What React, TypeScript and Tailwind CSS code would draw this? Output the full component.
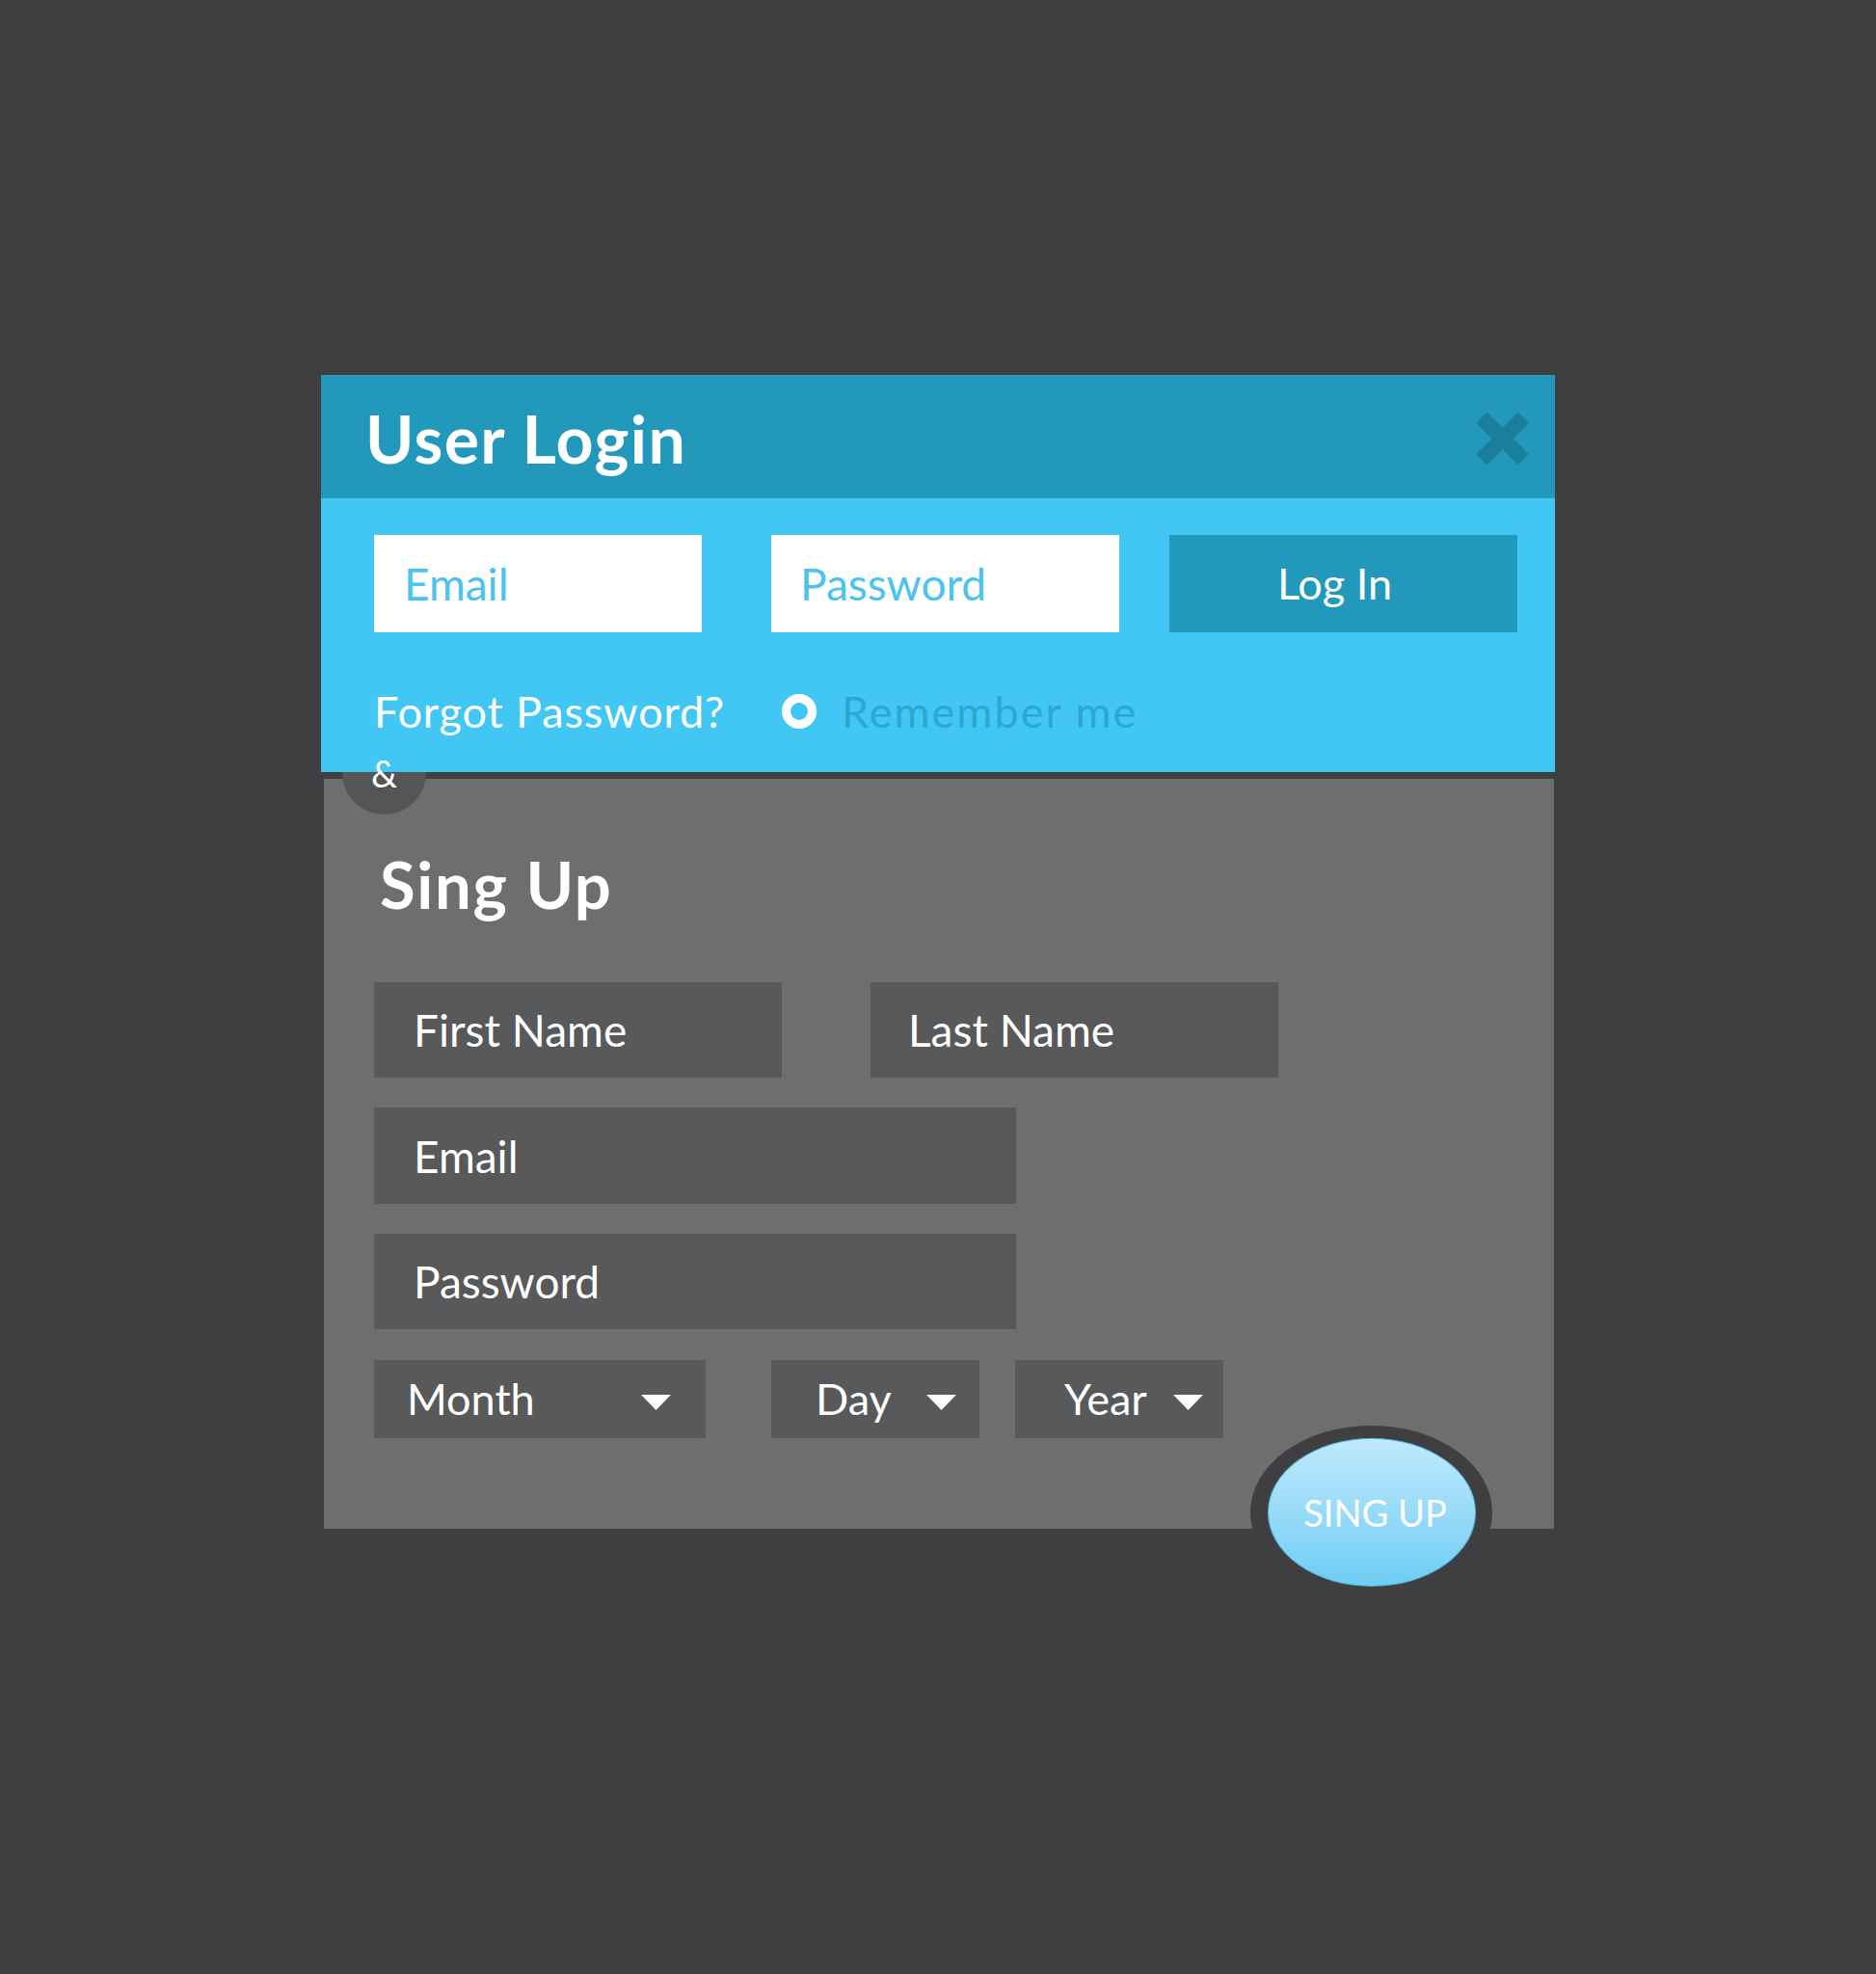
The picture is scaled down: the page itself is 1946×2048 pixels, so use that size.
import React from 'react';

const Caret = () => (
  <svg width="31" height="16" viewBox="0 0 31 16" aria-hidden="true">
    <polygon points="0,0 31,0 15.5,16" fill="#ffffff" />
  </svg>
);

const CloseIcon = () => (
  <svg width="55" height="56" viewBox="0 0 55 56" aria-hidden="true">
    <g stroke="#1b7f9b" strokeWidth="16" strokeLinecap="butt">
      <line x1="5.7" y1="6.2" x2="49.3" y2="49.8" />
      <line x1="49.3" y1="6.2" x2="5.7" y2="49.8" />
    </g>
  </svg>
);

interface DateSelectProps {
  label: string;
  className: string;
}

const DateSelect: React.FC<DateSelectProps> = ({ label, className }) => (
  <button
    type="button"
    className={`flex h-[81px] items-center justify-between bg-[#58595b] text-[45px] leading-none text-white ${className}`}
  >
    <span>{label}</span>
    <span className="mt-[6px]">
      <Caret />
    </span>
  </button>
);

const App: React.FC = () => {
  return (
    <div className="min-h-screen w-full bg-[#3f3f41] pt-[389px] font-['Lato','Open_Sans',sans-serif]">
      <div className="relative mx-auto w-[1280px]">
        {/* header */}
        <div className="flex h-[128px] items-center justify-between bg-[#2299ba] pl-[46px] pr-[27px]">
          <h1 className="mt-[4px] text-[68px] font-bold leading-none tracking-[0.02em] text-white">User Login</h1>
          <button type="button" className="mt-[4px]">
            <CloseIcon />
          </button>
        </div>

        {/* login form */}
        <div className="relative z-10 h-[284px] bg-[#42c7f4] pl-[55px] pt-[38px]">
          <div className="flex h-[101px]">
            <input
              type="email"
              placeholder="Email"
              className="w-[340px] bg-white pl-[31px] text-[46px] leading-none text-[#45bfea] outline-none placeholder:text-[#4cc3ef]"
            />
            <input
              type="password"
              placeholder="Password"
              className="ml-[72px] w-[361px] bg-white pl-[30px] text-[46px] leading-none text-[#45bfea] outline-none placeholder:text-[#4cc3ef]"
            />
            <button
              type="button"
              className="ml-[52px] w-[361px] bg-[#2299ba] pr-[18px] text-[45px] leading-none text-white"
            >
              Log In
            </button>
          </div>
          <div className="mt-[57px] flex h-[50px] items-center">
            <a href="#" className="w-[366px] text-[45px] leading-none tracking-[0.02em] text-white">
              Forgot Password?
            </a>
            <label className="ml-[57px] flex items-center">
              <span className="h-[36px] w-[36px] rounded-full border-[9px] border-white" />
              <span className="ml-[26px] text-[45px] leading-none tracking-[0.045em] text-[#2ba7d0]">
                Remember me
              </span>
            </label>
          </div>
        </div>

        {/* ampersand badge between the two forms */}
        <div className="absolute left-[22px] top-[369px] h-[87px] w-[87px] rounded-full bg-[#545557]" />
        <div className="absolute left-[22px] top-[369px] z-20 flex h-[87px] w-[87px] items-center justify-center text-[38px] leading-none text-white">
          &amp;
        </div>

        {/* sign up form */}
        <div className="ml-[3px] mr-[1px] mt-[7px] h-[778px] bg-[#6d6e70] pl-[52px] pt-[76px]">
          <h2 className="ml-[6px] text-[67px] font-bold leading-none tracking-[0.025em] text-white">Sing Up</h2>
          <div className="mt-[68px] flex gap-[92px]">
            <input
              type="text"
              placeholder="First Name"
              className="h-[99px] w-[423px] bg-[#58595b] pl-[41px] text-[46px] leading-none text-white outline-none placeholder:text-white"
            />
            <input
              type="text"
              placeholder="Last Name"
              className="h-[99px] w-[423px] bg-[#58595b] pl-[39px] text-[46px] leading-none text-white outline-none placeholder:text-white"
            />
          </div>
          <input
            type="email"
            placeholder="Email"
            className="mt-[31px] block h-[100px] w-[666px] bg-[#58595b] pl-[41px] text-[46px] leading-none text-white outline-none placeholder:text-white"
          />
          <input
            type="password"
            placeholder="Password"
            className="mt-[31px] block h-[99px] w-[666px] bg-[#58595b] pl-[41px] text-[46px] leading-none text-white outline-none placeholder:text-white"
          />
          <div className="mt-[32px] flex">
            <DateSelect label="Month" className="w-[344px] pl-[34px] pr-[36px]" />
            <DateSelect label="Day" className="ml-[68px] w-[216px] pl-[46px] pr-[24px]" />
            <DateSelect label="Year" className="ml-[37px] w-[216px] pl-[51px] pr-[21px]" />
          </div>
        </div>

        {/* sign up button */}
        <div className="absolute left-[964px] top-[1090px] flex h-[180px] w-[251px] items-center justify-center rounded-[50%] bg-[#3f3f41]">
          <button
            type="button"
            className="flex h-[154px] w-[216px] items-center justify-center rounded-[50%] border border-[#5ab9df] bg-linear-to-b from-[#bfe9fb] to-[#6ccdf4] pl-[8px] text-[38px] leading-none text-white"
          >
            SING UP
          </button>
        </div>
      </div>
    </div>
  );
};

export default App;
